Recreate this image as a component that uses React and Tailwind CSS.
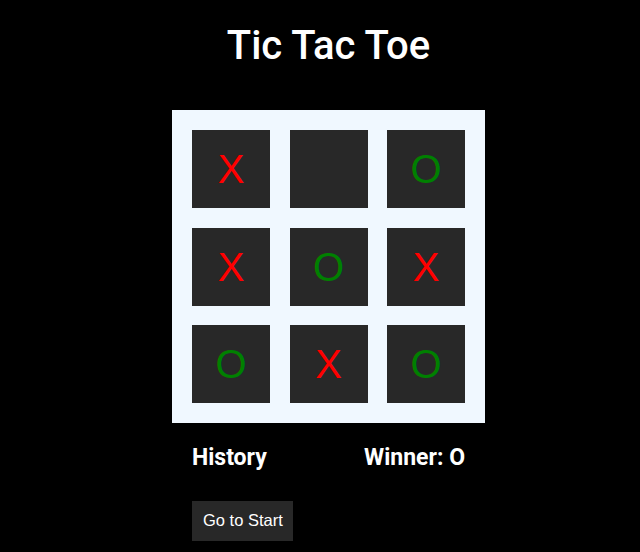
const squares = ['X', null, 'O', 'X', 'O', 'X', 'O', 'X', 'O'];

function Square({ value }) {
  return (
    <div className="w-[78px] h-[78px] bg-[#282828] flex items-center justify-center">
      {value && (
        <span
          className={`text-[40px] leading-none ${value === 'X' ? 'text-[#ff0000]' : 'text-[#008000]'}`}
          style={{ fontFamily: '"Liberation Sans", Arial, sans-serif' }}
        >
          {value}
        </span>
      )}
    </div>
  );
}

export default function App() {
  return (
    <div className="min-h-[552px] bg-black pl-[17px] text-white font-['Roboto',sans-serif]">
      <div className="flex flex-col items-center">
        <h1 className="mt-[22px] text-[40px] leading-[48px] font-medium">Tic Tac Toe</h1>
        <div className="mt-[40px] bg-[#f0f8ff] p-5 grid grid-cols-3 gap-x-[19.5px] gap-y-[19.5px]">
          {squares.map((v, i) => (
            <Square key={i} value={v} />
          ))}
        </div>
        <div className="w-[313px] px-5 mt-[21px] flex justify-between items-center">
          <h2 className="text-[23px] font-bold leading-7">History</h2>
          <h2 className="text-[23px] font-bold leading-7">Winner: O</h2>
        </div>
        <div className="w-[313px] px-5 mt-[29px]">
          <button
            className="bg-[#282828] text-white text-[16.5px] h-10 pl-[11px] pr-[10px] pb-[1px]"
            style={{ fontFamily: '"Liberation Sans", Arial, sans-serif' }}
          >
            Go to Start
          </button>
        </div>
      </div>
    </div>
  );
}
